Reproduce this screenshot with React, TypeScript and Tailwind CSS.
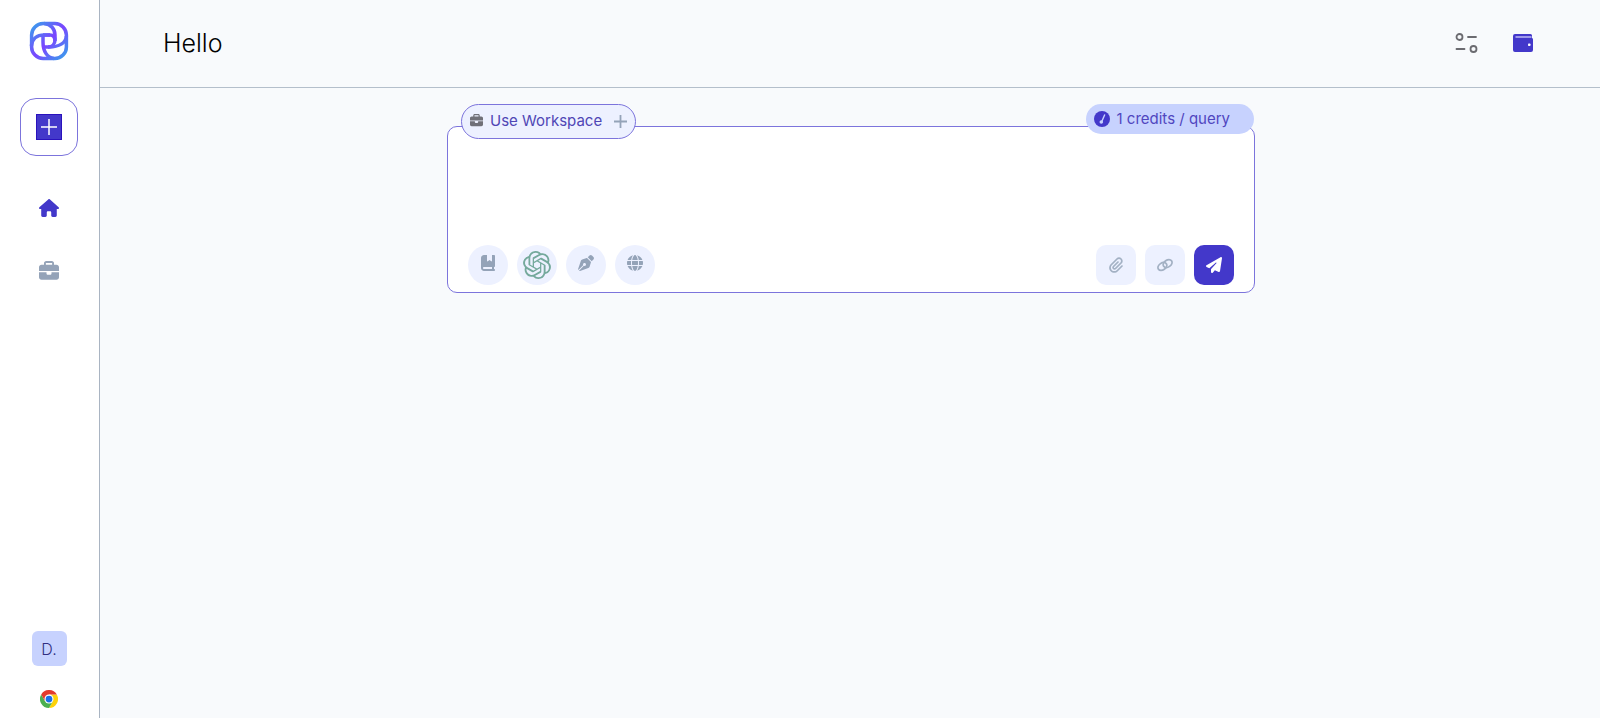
import { useState } from "react";
import {
    FaBookBookmark,
    FaBriefcase,
    FaGlobe,
    FaHouse,
    FaPaperclip,
    FaPaperPlane,
    FaPenNib,
} from "react-icons/fa6";
import { SiOpenai } from "react-icons/si";

const Logo = () => (
    <svg className="size-10" viewBox="-20 -20 40 40" fill="none" stroke="url(#logoGradient)" strokeWidth="3.5">
        <defs>
            <linearGradient id="logoGradient" gradientUnits="userSpaceOnUse" x1="-17" y1="-17" x2="17" y2="17">
                <stop offset="0.05" stopColor="#3f96ee" />
                <stop offset="0.5" stopColor="#7a45ff" />
                <stop offset="0.95" stopColor="#3f96ee" />
            </linearGradient>
        </defs>
        <rect x="-17.4" y="-17.4" width="34.8" height="34.8" rx="11.5" />
        <path d="M1 -6H-5C-12 -6 -17 -2 -17.6 5" />
        <path d="M-6 -6V1C-6 10 -2 17 5 17.4" />
        <path d="M-6 6H0C10 6 17 2 17.4 -5" />
        <path d="M-5 -17.4C2 -17 6 -12 6 -6V-1C6 3 3 6 -1 6" />
        <path d="M-6 -6H1C4 -6 6 -4 6 0" />
    </svg>
);

const ChromeLogo = () => (
    <svg className="size-[18px]" viewBox="0 0 48 48">
        <path fill="#fdd20a" d="M24 12H44.8A24 24 0 0 1 24 48L34.4 30Z" />
        <path fill="#4caf50" d="M3.2 12A24 24 0 0 0 24 48L34.4 30 24 24 13.6 30Z" />
        <path fill="#e33b2e" d="M3.2 12 13.6 30 24 12H44.8A24 24 0 0 0 3.2 12Z" />
        <circle cx="24" cy="24" r="12" fill="#fff" />
        <circle cx="24" cy="24" r="9" fill="#1a6fe8" />
    </svg>
);

const FilterIcon = () => (
    <svg className="h-5 w-6" viewBox="0 0 24 20" fill="none" stroke="#6b6b70" strokeWidth="1.8">
        <circle cx="4.5" cy="4" r="3" />
        <path d="M13 4h8M1.5 16h8" strokeLinecap="round" />
        <circle cx="18.5" cy="16" r="3" />
    </svg>
);

const WalletIcon = () => (
    <svg className="h-5 w-5" viewBox="0 0 20 20">
        <path fill="#4338ca" d="M2 1H17.5Q19 1 19 2.5V5Q20 5.2 20 6.5V17Q20 19 18 19H2Q0 19 0 17V3Q0 1 2 1Z" />
        <path stroke="#a9a5ee" strokeWidth="1.8" d="M2.5 4H18.5" />
        <rect x="15" y="10.5" width="2.5" height="2.5" rx="0.8" fill="#fff" />
    </svg>
);

const GaugeIcon = () => (
    <svg className="size-4" viewBox="0 0 16 16">
        <circle cx="8" cy="8" r="8" fill="#4338ca" />
        <path d="M10.6 4 8 10" stroke="#c7d2fe" strokeWidth="1.4" strokeLinecap="round" />
        <circle cx="7.3" cy="11" r="1.8" fill="#c7d2fe" />
    </svg>
);

const LinkIcon = () => (
    <svg className="size-4" viewBox="0 0 16 16" fill="none" stroke="currentColor" strokeWidth="1.8">
        <ellipse cx="5.4" cy="9.4" rx="4.8" ry="3.4" transform="rotate(-35 5.4 9.4)" />
        <ellipse cx="10.6" cy="6.6" rx="4.8" ry="3.4" transform="rotate(-35 10.6 6.6)" />
    </svg>
);

// 입력창 왼쪽 하단 옵션
const options = [
    { label: "Library", icon: <FaBookBookmark className="mb-1 size-4" /> },
    { label: "Model", icon: <SiOpenai className="size-7 text-[#75a99c]" /> },
    { label: "Writing style", icon: <FaPenNib className="mb-1 size-4" /> },
    { label: "Web", icon: <FaGlobe className="mb-1 size-4" /> },
];

export default function App() {
    const [query, setQuery] = useState("");

    return (
        <div className="flex min-h-screen bg-[#f8fafc] font-['Inter',sans-serif]">
            {/* 사이드바 */}
            <aside className="flex w-[100px] shrink-0 flex-col items-center border-r border-[#a9b4c2] bg-white pt-[21px] pr-px pb-2.5">
                <a href="#" aria-label="Logo">
                    <Logo />
                </a>
                <button
                    type="button"
                    aria-label="New"
                    className="mt-[37px] flex size-[58px] items-center justify-center rounded-2xl border border-[#7c74dc]"
                >
                    <svg className="size-[26px]" viewBox="0 0 26 26" fill="none">
                        <rect x="0.5" y="0.5" width="25" height="25" fill="#4338ca" stroke="#2a12bd" />
                        <path d="M13 5v16M5 13h16" stroke="#fff" strokeWidth="1.5" />
                    </svg>
                </button>
                <nav className="mt-10 flex flex-col items-center gap-[39px]">
                    <a href="#" aria-label="Home" className="flex h-6 items-center text-[#4338ca]">
                        <FaHouse className="size-5" />
                    </a>
                    <a href="#" aria-label="Workspaces" className="flex h-6 items-center text-[#94a3b8]">
                        <FaBriefcase className="size-5" />
                    </a>
                </nav>
                <div className="mt-auto flex flex-col items-center gap-6">
                    <button
                        type="button"
                        className="flex size-[35px] items-center justify-center rounded-md bg-[#c7d2fe] text-base font-light text-[#312e81]"
                    >
                        D.
                    </button>
                    <a href="#" aria-label="Chrome extension">
                        <ChromeLogo />
                    </a>
                </div>
            </aside>

            <div className="min-w-0 flex-1">
                {/* 헤더 */}
                <header className="flex h-[88px] items-center justify-between border-b border-[#b4bfcb] pr-[67px] pl-[63px]">
                    <h1 className="text-[25px] font-light text-black">Hello</h1>
                    <div className="flex items-center gap-[34px] pb-0.5">
                        <button type="button" aria-label="Filters">
                            <FilterIcon />
                        </button>
                        <button type="button" aria-label="Wallet">
                            <WalletIcon />
                        </button>
                    </div>
                </header>

                {/* 질문 입력 */}
                <main className="pt-[38px] pr-6 pl-[26px]">
                    <form
                        className="relative mx-auto flex w-full max-w-[808px] flex-col rounded-[10px] border border-[#7c74dc] bg-white px-5 pb-[7px]"
                        onSubmit={(e) => e.preventDefault()}
                    >
                        <button
                            type="button"
                            className="absolute -top-[23px] left-[13px] flex h-[35px] items-center rounded-full border border-[#7c74dc] bg-[#edf1ff] px-2 text-[15px] text-[#4f46b5]"
                        >
                            <FaBriefcase className="mb-0.5 size-[13px] text-[#707078]" />
                            <span className="mr-3 ml-[7px]">Use Workspace</span>
                            <svg className="size-[13px]" viewBox="0 0 13 13" stroke="#94a3b8" strokeWidth="1.8">
                                <path d="M6.5 0v13M0 6.5h13" />
                            </svg>
                        </button>
                        <div className="absolute -top-[23px] right-0 flex h-[30px] items-center gap-[7px] rounded-full bg-[#c7d2fe] pr-6 pl-2 text-[15px] text-[#5046c0]">
                            <GaugeIcon />
                            1 credits / query
                        </div>

                        <textarea
                            aria-label="Query"
                            value={query}
                            onChange={(e) => setQuery(e.target.value)}
                            className="mt-5 h-[98px] w-full resize-none bg-transparent text-base outline-none"
                        />

                        <div className="flex justify-between">
                            <div className="flex gap-[9px]">
                                {options.map((option) => (
                                    <button
                                        key={option.label}
                                        type="button"
                                        aria-label={option.label}
                                        className="flex size-10 items-center justify-center rounded-full bg-[#edf1ff] text-[#94a3b8]"
                                    >
                                        {option.icon}
                                    </button>
                                ))}
                            </div>
                            <div className="flex gap-[9px]">
                                <button
                                    type="button"
                                    aria-label="Attach file"
                                    className="flex size-10 items-center justify-center rounded-[10px] bg-[#edf1ff] text-[#a3b1c4]"
                                >
                                    <FaPaperclip className="size-4" />
                                </button>
                                <button
                                    type="button"
                                    aria-label="Add link"
                                    className="flex size-10 items-center justify-center rounded-[10px] bg-[#edf1ff] text-[#a3b1c4]"
                                >
                                    <LinkIcon />
                                </button>
                                <button
                                    type="submit"
                                    aria-label="Send"
                                    className="flex size-10 items-center justify-center rounded-[10px] bg-[#4338ca] text-white"
                                >
                                    <FaPaperPlane className="size-4" />
                                </button>
                            </div>
                        </div>
                    </form>
                </main>
            </div>
        </div>
    );
}
